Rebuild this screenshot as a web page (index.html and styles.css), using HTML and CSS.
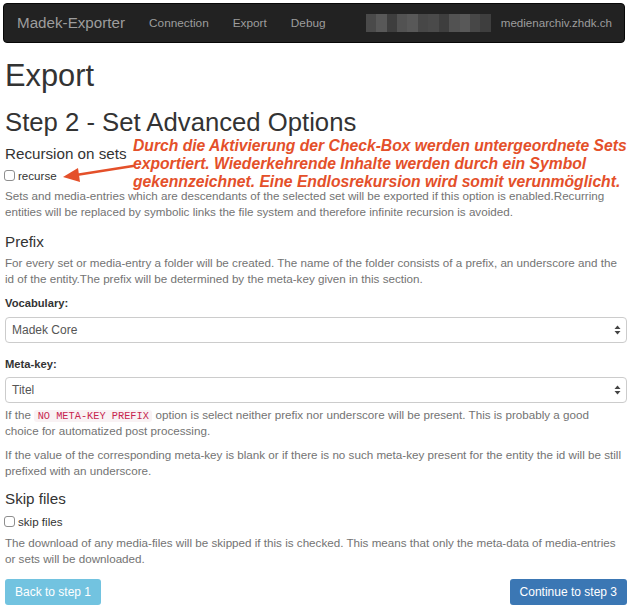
FILE: index.html
```html
<!DOCTYPE html>
<html lang="en">
<head>
<meta charset="utf-8">
<title>Madek-Exporter</title>
<link rel="stylesheet" href="styles.css">
</head>
<body>
<div class="page">
  <nav class="navbar">
    <div class="nav-left">
      <span class="brand">Madek-Exporter</span>
      <span class="nav-link">Connection</span>
      <span class="nav-link">Export</span>
      <span class="nav-link">Debug</span>
    </div>
    <div class="nav-right">
      <span class="blurred">
        <i class="b1"></i><i class="b2"></i><i class="b3"></i><i class="b4"></i><i class="b2"></i><i class="b5"></i><i class="b1"></i><i class="b3"></i><i class="b4"></i><i class="b2"></i><i class="b5"></i><i class="b3"></i>
      </span>
      <span class="server">medienarchiv.zhdk.ch</span>
    </div>
  </nav>

  <main class="content">
    <h1 class="title">Export</h1>
    <h2 class="step">Step 2 - Set Advanced Options</h2>

    <section class="recursion">
      <h4 class="section-title st-recursion">Recursion on sets</h4>
      <label class="check ck-recurse"><span class="box"></span>recurse</label>
      <p class="help hp-recurse">Sets and media-entries which are descendants of the selected set will be exported if this option is enabled.Recurring entities will be replaced by symbolic links the file system and therefore infinite recursion is avoided.</p>

      <div class="annotation">Durch die Aktivierung der Check-Box werden untergeordnete Sets exportiert. Wiederkehrende Inhalte werden durch ein Symbol gekennzeichnet. Eine Endlosrekursion wird somit verunmöglicht.</div>
      <svg class="arrow" width="74" height="22" viewBox="0 0 74 22">
        <line x1="71" y1="5" x2="14" y2="14" stroke="#e4502a" stroke-width="2.6" stroke-linecap="round"/>
        <polygon points="1,16 16,7 18,21" fill="#e4502a"/>
      </svg>
    </section>

    <h4 class="section-title st-prefix">Prefix</h4>
    <p class="help hp-prefix">For every set or media-entry a folder will be created. The name of the folder consists of a prefix, an underscore and the id of the entity.The prefix will be determined by the meta-key given in this section.</p>

    <label class="field-label fl-vocab">Vocabulary:</label>
    <div class="select sel-vocab">
      <span>Madek Core</span>
      <svg class="updown" width="7" height="10" viewBox="0 0 7 10"><polygon points="3.5,0.5 6.5,4 0.5,4" fill="#444"/><polygon points="0.5,6 6.5,6 3.5,9.5" fill="#444"/></svg>
    </div>

    <label class="field-label fl-meta">Meta-key:</label>
    <div class="select sel-meta">
      <span>Titel</span>
      <svg class="updown" width="7" height="10" viewBox="0 0 7 10"><polygon points="3.5,0.5 6.5,4 0.5,4" fill="#444"/><polygon points="0.5,6 6.5,6 3.5,9.5" fill="#444"/></svg>
    </div>
    <p class="help hp-nometa">If the <code>NO META-KEY PREFIX</code> option is select neither prefix nor underscore will be present. This is probably a good choice for automatized post processing.</p>
    <p class="help hp-blank">If the value of the corresponding meta-key is blank or if there is no such meta-key present for the entity the id will be still prefixed with an underscore.</p>

    <h4 class="section-title st-skip">Skip files</h4>
    <label class="check ck-skip"><span class="box"></span>skip files</label>
    <p class="help hp-skip">The download of any media-files will be skipped if this is checked. This means that only the meta-data of media-entries or sets will be downloaded.</p>

    <div class="actions">
      <span class="btn btn-back">Back to step 1</span>
      <span class="btn btn-next">Continue to step 3</span>
    </div>
  </main>
</div>
</body>
</html>
```

FILE: styles.css
```css
* { box-sizing: border-box; }
html, body { margin: 0; padding: 0; background: #fff; }
body {
  font-family: "Liberation Sans", Arial, sans-serif;
  font-size: 12px;
  line-height: 16px;
  color: #333;
}
.page { padding: 3px 3px 0 3px; }

.navbar {
  height: 40px;
  margin-right: 2px;
  background: #222;
  border: 1px solid #080808;
  border-radius: 4px;
  display: flex;
  align-items: center;
  justify-content: space-between;
  color: #9d9d9d;
}
.nav-left, .nav-right { display: flex; align-items: center; }
.brand { font-size: 15.2px; padding: 0 12px 0 13px; }
.nav-link { font-size: 11.8px; padding: 0 12px; }
.nav-right { padding-right: 12px; }
.server { font-size: 11.6px; margin-left: 10px; }
.blurred { display: flex; width: 125px; height: 18px; }
.blurred i { flex: 1; display: block; }
.b1 { background: #4a4a4a; }
.b2 { background: #585858; }
.b3 { background: #3e3e3e; }
.b4 { background: #525252; }
.b5 { background: #474747; }

.content { padding: 0 0 0 2px; }
.title { font-size: 30.8px; font-weight: 500; line-height: 34px; margin: 16px 0 0; color: #333; }
.step { font-size: 25.7px; font-weight: 500; line-height: 28px; margin: 15px 0 0; color: #333; }

.recursion { position: relative; padding-top: 8.5px; }
.section-title { font-size: 15.2px; font-weight: 500; line-height: 17px; margin: 0; color: #333; }
.st-recursion { margin-top: 0; }
.st-prefix { margin-top: 12.5px; }
.st-skip { margin-top: 10.5px; }

.check { display: flex; align-items: center; gap: 3px; height: 16px; font-size: 11.6px; color: #333; }
.ck-recurse { margin-top: 6px; margin-left: -1px; }
.ck-skip { margin-top: 7px; margin-left: -1px; }
.box { width: 11px; height: 11px; border: 1px solid #8e8e8e; border-radius: 3px; background: #fff; }

.help { margin: 0; padding-right: 4px; color: #737373; font-size: 11.65px; }
.hp-recurse { margin-top: 4.5px; }
.hp-prefix { margin-top: 5.5px; }
.hp-nometa { margin-top: 4px; }
.hp-blank { margin-top: 8px; }
.hp-skip { margin-top: 5.5px; }

.annotation {
  position: absolute;
  left: 128px;
  top: 1px;
  width: 505px;
  font-size: 15.7px;
  line-height: 18px;
  font-weight: bold;
  font-style: italic;
  color: #e4502a;
}
.arrow { position: absolute; left: 57px; top: 25px; }

.field-label { display: block; font-weight: bold; font-size: 11.2px; line-height: 16px; }
.fl-vocab { margin-top: 8px; }
.fl-meta { margin-top: 13px; }
.select {
  height: 26px;
  border: 1px solid #ccc;
  border-radius: 4px;
  display: flex;
  align-items: center;
  justify-content: space-between;
  padding: 0 5px 0 6px;
  color: #555;
}
.sel-vocab { margin-top: 6px; }
.sel-meta { margin-top: 5px; }
code {
  font-family: "Liberation Mono", monospace;
  font-size: 10.3px;
  line-height: 12px;
  color: #c7254e;
  background: #f9f2f4;
  padding: 0 3.5px;
  border-radius: 3px;
}

.actions { display: flex; justify-content: space-between; margin-top: 12px; }
.btn {
  height: 26px;
  display: flex;
  align-items: center;
  padding: 0 10px;
  border-radius: 3px;
  color: #fff;
  font-size: 12px;
}
.btn-back { background: #72c3e0; }
.btn-next { background: #3b77b4; }
```
